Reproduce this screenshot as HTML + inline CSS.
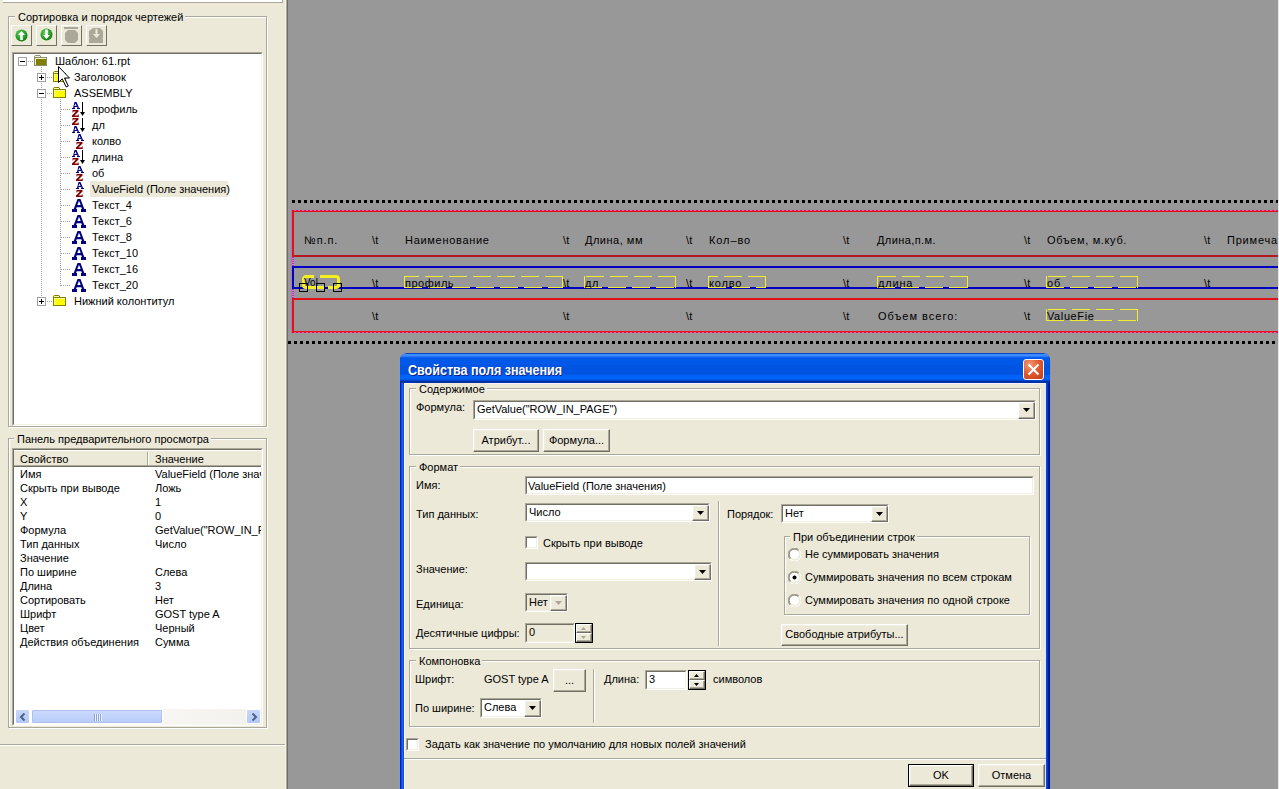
<!DOCTYPE html>
<html><head><meta charset="utf-8">
<style>
*{margin:0;padding:0;box-sizing:border-box}
html,body{width:1279px;height:789px;overflow:hidden;background:#ECE9D8;font-family:"Liberation Sans",sans-serif;font-size:11px;color:#000;position:relative}
.a{position:absolute}
.t{position:absolute;white-space:nowrap;line-height:13px;font-size:11px}
.gb{position:absolute;border:1px solid #ACA899;box-shadow:inset 1px 1px 0 #fff,1px 1px 0 #fff}
.lbl{position:absolute;background:#ECE9D8;padding:0 2px 0 1px;line-height:13px;white-space:nowrap}
.sunk{position:absolute;border-style:solid;border-width:1px;border-color:#ACA899 #fff #fff #ACA899;background:#fff}
.sunk>.in{position:absolute;left:0;top:0;right:0;bottom:0;border-style:solid;border-width:1px;border-color:#716F64 #F1EFE2 #F1EFE2 #716F64}
.tb{position:absolute;width:21px;height:21px;border-style:solid;border-width:1px;border-color:#fff #716F64 #716F64 #fff}
.hd{position:absolute;height:1px;background:repeating-linear-gradient(90deg,#A0A0A0 0 1px,transparent 1px 2px)}
.vd{position:absolute;width:1px;background:repeating-linear-gradient(180deg,#A0A0A0 0 1px,transparent 1px 2px)}
.pm{position:absolute;width:9px;height:9px;border:1px solid #A0A0A0;background:#fff}
.pm>div{margin:0}
.pm .a{left:1px}
.cv{position:absolute}
.g{position:absolute;white-space:nowrap;line-height:13px;font-size:11px;color:#000}
.btn{position:absolute;background:#ECE9D8;border-style:solid;border-width:1px;border-color:#fff #716F64 #716F64 #fff;box-shadow:inset -1px -1px 0 #ACA899,inset 1px 1px 0 #F1EFE2}
</style></head><body>
<!-- LEFT PANEL -->
<div class="a" style="left:3px;top:-10px;width:280px;height:13px;background:#fff;border-right:1px solid #ACA899;border-bottom:1px solid #ACA899"></div>
<div class="a" style="left:285px;top:0;width:1px;height:789px;background:#F5F3EA"></div>
<div class="a" style="left:286px;top:0;width:1px;height:789px;background:#ACA899"></div>
<div class="a" style="left:287px;top:0;width:1px;height:789px;background:#716F64"></div>

<div class="gb" style="left:8px;top:16px;width:259px;height:411px"></div>
<div class="lbl" style="left:15px;top:11px;padding:0 2px 0 3px">Сортировка и порядок чертежей</div>
<!-- toolbar -->
<div class="tb" style="left:11px;top:25px"><svg class="a" style="left:3px;top:3px" width="13" height="13" viewBox="0 0 13 13"><defs><radialGradient id="g1" cx="0.4" cy="0.35" r="0.7"><stop offset="0" stop-color="#5FD35F"/><stop offset="1" stop-color="#0A7A0A"/></radialGradient></defs><circle cx="6.5" cy="6.5" r="6" fill="url(#g1)"/><path d="M6.5,2l3.5,4h-2.2v5h-2.6v-5h-2.2z" fill="#fff"/></svg></div>
<div class="tb" style="left:36px;top:25px"><svg class="a" style="left:3px;top:2px" width="13" height="13" viewBox="0 0 13 13"><circle cx="6.5" cy="6.5" r="6" fill="url(#g1)"/><path d="M6.5,11l3.5,-4h-2.2v-5.5h-2.6v5.5h-2.2z" fill="#fff"/></svg></div>
<div class="tb" style="left:61px;top:25px"><svg class="a" style="left:2px;top:1px" width="16" height="17" viewBox="0 0 16 17"><rect x="0" y="0" width="14" height="2" fill="#ACA899"/><path d="M4,3h7l3,3v7l-3,3h-7l-3,-3v-7z" fill="#ACA899"/></svg></div>
<div class="tb" style="left:86px;top:25px"><svg class="a" style="left:2px;top:1px" width="16" height="17" viewBox="0 0 16 17"><path d="M4,1h7l3,3v7l-1,1h1v4h-14v-4h1l-1,-1v-7z" fill="#ACA899"/><path d="M6.5,2h2v5h2.5l-3.5,4l-3.5,-4h2.5z" fill="#ECE9D8"/></svg></div>

<!-- tree view -->
<div class="sunk" style="left:12px;top:52px;width:251px;height:374px"><div class="in"></div></div>
<div class="vd" style="left:41px;top:67px;height:234px"></div>
<div class="vd" style="left:60px;top:99px;height:187px"></div>
<div class="hd" style="left:28px;top:61px;width:6px"></div>
<div class="pm" style="left:18px;top:57px"><div class="a" style="left:1px;top:3px;width:5px;height:1px;background:#000"></div></div>
<div class="a" style="left:34px;top:55px;width:13px;height:11px"><svg class="a" style="left:0;top:0" width="13" height="11" viewBox="0 0 13 11"><path d="M0.5,2.5V1.2L1.2,0.5H6L7,2.5" fill="#F4F0C8" stroke="#8C8C70" stroke-width="1"/><rect x="0.5" y="2.5" width="12" height="8" fill="#808000" stroke="#8C8C70" stroke-width="1"/><path d="M1.5,10V3.5H12" fill="none" stroke="#F4F0C8" stroke-width="1"/></svg></div>
<div class="t" style="left:55px;top:55px">Шаблон: 61.rpt</div>
<div class="hd" style="left:47px;top:77px;width:6px"></div>
<div class="pm" style="left:37px;top:73px"><div class="a" style="left:1px;top:3px;width:5px;height:1px;background:#000"></div><div class="a" style="left:3px;top:1px;width:1px;height:5px;background:#000"></div></div>
<div class="a" style="left:53px;top:71px;width:13px;height:11px"><svg class="a" style="left:0;top:0" width="13" height="11" viewBox="0 0 13 11"><path d="M0.5,2.5V1.2L1.2,0.5H6L7,2.5" fill="#FFFFA0" stroke="#808000" stroke-width="1"/><rect x="0.5" y="2.5" width="12" height="8" fill="#FFFF00" stroke="#808000" stroke-width="1"/><path d="M1.5,10V3.5H12" fill="none" stroke="#FFFFA0" stroke-width="1"/></svg></div>
<div class="t" style="left:74px;top:71px">Заголовок</div>
<div class="hd" style="left:47px;top:93px;width:6px"></div>
<div class="pm" style="left:37px;top:89px"><div class="a" style="left:1px;top:3px;width:5px;height:1px;background:#000"></div></div>
<div class="a" style="left:53px;top:87px;width:13px;height:11px"><svg class="a" style="left:0;top:0" width="13" height="11" viewBox="0 0 13 11"><path d="M0.5,2.5V1.2L1.2,0.5H6L7,2.5" fill="#FFFFA0" stroke="#808000" stroke-width="1"/><rect x="0.5" y="2.5" width="12" height="8" fill="#FFFF00" stroke="#808000" stroke-width="1"/><path d="M1.5,10V3.5H12" fill="none" stroke="#FFFFA0" stroke-width="1"/></svg></div>
<div class="t" style="left:74px;top:87px">ASSEMBLY</div>
<div class="hd" style="left:61px;top:109px;width:10px"></div>
<svg class="a" style="left:72px;top:101px" width="16" height="16" viewBox="0 0 16 16"><g transform="translate(0,1)"><path d="M2.5,0h2l2.5,6h1v1h-3v-1h0.6l-0.4-1h-2.4l-0.4,1h0.6v1h-3v-1h1z M2.4,4h2.2l-1.1,-2.6z" fill="#00007F" fill-rule="evenodd"/></g><g transform="translate(0,9)"><path d="M0.5,0h6v1.6l-4,4h3.2v-1h1v2.4h-6.7v-1.6l4-4h-2.8v1h-0.7z" fill="#7F0000"/></g><rect x="10" y="1" width="1" height="11" fill="#000"/><path d="M8,11h5l-2.5,4z" fill="#000"/></svg>
<div class="t" style="left:92px;top:103px">профиль</div>
<div class="hd" style="left:61px;top:125px;width:10px"></div>
<svg class="a" style="left:72px;top:117px" width="16" height="16" viewBox="0 0 16 16"><g transform="translate(0,1)"><path d="M0.5,0h6v1.6l-4,4h3.2v-1h1v2.4h-6.7v-1.6l4-4h-2.8v1h-0.7z" fill="#7F0000"/></g><g transform="translate(0,9)"><path d="M2.5,0h2l2.5,6h1v1h-3v-1h0.6l-0.4-1h-2.4l-0.4,1h0.6v1h-3v-1h1z M2.4,4h2.2l-1.1,-2.6z" fill="#00007F" fill-rule="evenodd"/></g><rect x="10" y="1" width="1" height="11" fill="#000"/><path d="M8,11h5l-2.5,4z" fill="#000"/></svg>
<div class="t" style="left:92px;top:119px">дл</div>
<div class="hd" style="left:61px;top:141px;width:10px"></div>
<svg class="a" style="left:72px;top:133px" width="16" height="16" viewBox="0 0 16 16"><g transform="translate(4,1)"><path d="M2.5,0h2l2.5,6h1v1h-3v-1h0.6l-0.4-1h-2.4l-0.4,1h0.6v1h-3v-1h1z M2.4,4h2.2l-1.1,-2.6z" fill="#00007F" fill-rule="evenodd"/></g><g transform="translate(4,9)"><path d="M0.5,0h6v1.6l-4,4h3.2v-1h1v2.4h-6.7v-1.6l4-4h-2.8v1h-0.7z" fill="#7F0000"/></g></svg>
<div class="t" style="left:92px;top:135px">колво</div>
<div class="hd" style="left:61px;top:157px;width:10px"></div>
<svg class="a" style="left:72px;top:149px" width="16" height="16" viewBox="0 0 16 16"><g transform="translate(0,1)"><path d="M2.5,0h2l2.5,6h1v1h-3v-1h0.6l-0.4-1h-2.4l-0.4,1h0.6v1h-3v-1h1z M2.4,4h2.2l-1.1,-2.6z" fill="#00007F" fill-rule="evenodd"/></g><g transform="translate(0,9)"><path d="M0.5,0h6v1.6l-4,4h3.2v-1h1v2.4h-6.7v-1.6l4-4h-2.8v1h-0.7z" fill="#7F0000"/></g><rect x="10" y="1" width="1" height="11" fill="#000"/><path d="M8,11h5l-2.5,4z" fill="#000"/></svg>
<div class="t" style="left:92px;top:151px">длина</div>
<div class="hd" style="left:61px;top:173px;width:10px"></div>
<svg class="a" style="left:72px;top:165px" width="16" height="16" viewBox="0 0 16 16"><g transform="translate(4,1)"><path d="M2.5,0h2l2.5,6h1v1h-3v-1h0.6l-0.4-1h-2.4l-0.4,1h0.6v1h-3v-1h1z M2.4,4h2.2l-1.1,-2.6z" fill="#00007F" fill-rule="evenodd"/></g><g transform="translate(4,9)"><path d="M0.5,0h6v1.6l-4,4h3.2v-1h1v2.4h-6.7v-1.6l4-4h-2.8v1h-0.7z" fill="#7F0000"/></g></svg>
<div class="t" style="left:92px;top:167px">об</div>
<div class="hd" style="left:61px;top:189px;width:10px"></div>
<svg class="a" style="left:72px;top:181px" width="16" height="16" viewBox="0 0 16 16"><g transform="translate(4,1)"><path d="M2.5,0h2l2.5,6h1v1h-3v-1h0.6l-0.4-1h-2.4l-0.4,1h0.6v1h-3v-1h1z M2.4,4h2.2l-1.1,-2.6z" fill="#00007F" fill-rule="evenodd"/></g><g transform="translate(4,9)"><path d="M0.5,0h6v1.6l-4,4h3.2v-1h1v2.4h-6.7v-1.6l4-4h-2.8v1h-0.7z" fill="#7F0000"/></g></svg>
<div class="a" style="left:90px;top:181px;width:138px;height:16px;background:#ECE9D8"></div>
<div class="t" style="left:92px;top:183px">ValueField (Поле значения)</div>
<div class="hd" style="left:61px;top:205px;width:10px"></div>
<svg class="a" style="left:72px;top:199px" width="14" height="13" viewBox="0 0 14 13"><path d="M5.5,0h3l3.8,10h1.7v3h-5v-3h0.9l-0.6,-1.8h-4.6l-0.6,1.8h0.9v3h-5v-3h1.7z M5.3,6h3.4l-1.7,-4.3z" fill="#00007F" fill-rule="evenodd"/></svg>
<div class="t" style="left:92px;top:199px">Текст_4</div>
<div class="hd" style="left:61px;top:221px;width:10px"></div>
<svg class="a" style="left:72px;top:215px" width="14" height="13" viewBox="0 0 14 13"><path d="M5.5,0h3l3.8,10h1.7v3h-5v-3h0.9l-0.6,-1.8h-4.6l-0.6,1.8h0.9v3h-5v-3h1.7z M5.3,6h3.4l-1.7,-4.3z" fill="#00007F" fill-rule="evenodd"/></svg>
<div class="t" style="left:92px;top:215px">Текст_6</div>
<div class="hd" style="left:61px;top:237px;width:10px"></div>
<svg class="a" style="left:72px;top:231px" width="14" height="13" viewBox="0 0 14 13"><path d="M5.5,0h3l3.8,10h1.7v3h-5v-3h0.9l-0.6,-1.8h-4.6l-0.6,1.8h0.9v3h-5v-3h1.7z M5.3,6h3.4l-1.7,-4.3z" fill="#00007F" fill-rule="evenodd"/></svg>
<div class="t" style="left:92px;top:231px">Текст_8</div>
<div class="hd" style="left:61px;top:253px;width:10px"></div>
<svg class="a" style="left:72px;top:247px" width="14" height="13" viewBox="0 0 14 13"><path d="M5.5,0h3l3.8,10h1.7v3h-5v-3h0.9l-0.6,-1.8h-4.6l-0.6,1.8h0.9v3h-5v-3h1.7z M5.3,6h3.4l-1.7,-4.3z" fill="#00007F" fill-rule="evenodd"/></svg>
<div class="t" style="left:92px;top:247px">Текст_10</div>
<div class="hd" style="left:61px;top:269px;width:10px"></div>
<svg class="a" style="left:72px;top:263px" width="14" height="13" viewBox="0 0 14 13"><path d="M5.5,0h3l3.8,10h1.7v3h-5v-3h0.9l-0.6,-1.8h-4.6l-0.6,1.8h0.9v3h-5v-3h1.7z M5.3,6h3.4l-1.7,-4.3z" fill="#00007F" fill-rule="evenodd"/></svg>
<div class="t" style="left:92px;top:263px">Текст_16</div>
<div class="hd" style="left:61px;top:285px;width:10px"></div>
<svg class="a" style="left:72px;top:279px" width="14" height="13" viewBox="0 0 14 13"><path d="M5.5,0h3l3.8,10h1.7v3h-5v-3h0.9l-0.6,-1.8h-4.6l-0.6,1.8h0.9v3h-5v-3h1.7z M5.3,6h3.4l-1.7,-4.3z" fill="#00007F" fill-rule="evenodd"/></svg>
<div class="t" style="left:92px;top:279px">Текст_20</div>
<div class="hd" style="left:47px;top:301px;width:6px"></div>
<div class="pm" style="left:37px;top:297px"><div class="a" style="left:1px;top:3px;width:5px;height:1px;background:#000"></div><div class="a" style="left:3px;top:1px;width:1px;height:5px;background:#000"></div></div>
<div class="a" style="left:53px;top:295px;width:13px;height:11px"><svg class="a" style="left:0;top:0" width="13" height="11" viewBox="0 0 13 11"><path d="M0.5,2.5V1.2L1.2,0.5H6L7,2.5" fill="#FFFFA0" stroke="#808000" stroke-width="1"/><rect x="0.5" y="2.5" width="12" height="8" fill="#FFFF00" stroke="#808000" stroke-width="1"/><path d="M1.5,10V3.5H12" fill="none" stroke="#FFFFA0" stroke-width="1"/></svg></div>
<div class="t" style="left:74px;top:295px">Нижний колонтитул</div>
<!-- cursor -->
<svg class="a" style="left:58px;top:66px" width="13" height="22" viewBox="0 0 13 22"><path d="M0.5,0.5V16.5L4.2,12.8L8.2,21L10.3,20L6.5,12H11.5Z" fill="#fff" stroke="#000" stroke-width="1" stroke-linejoin="miter"/></svg>

<!-- preview panel -->
<div class="gb" style="left:8px;top:438px;width:259px;height:290px"></div>
<div class="lbl" style="left:14px;top:433px;padding:0 2px 0 3px">Панель предварительного просмотра</div>
<div class="sunk" style="left:12px;top:448px;width:251px;height:278px"><div class="in"></div></div>
<div class="a" style="left:14px;top:450px;width:247px;height:17px;background:#ECE9D8;border-top:1px solid #fff;border-bottom:1px solid #716F64;box-shadow:inset 0 -1px 0 #ACA899"></div>
<div class="a" style="left:147px;top:452px;width:1px;height:13px;background:#ACA899"></div>
<div class="a" style="left:148px;top:452px;width:1px;height:13px;background:#fff"></div>
<div class="t" style="left:20px;top:453px">Свойство</div>
<div class="t" style="left:155px;top:453px">Значение</div>
<div class="t" style="left:20px;top:468px">Имя</div>
<div class="t" style="left:155px;top:468px;width:106px;overflow:hidden">ValueField (Поле знач</div>
<div class="t" style="left:20px;top:482px">Скрыть при выводе</div>
<div class="t" style="left:155px;top:482px;width:106px;overflow:hidden">Ложь</div>
<div class="t" style="left:20px;top:496px">X</div>
<div class="t" style="left:155px;top:496px;width:106px;overflow:hidden">1</div>
<div class="t" style="left:20px;top:510px">Y</div>
<div class="t" style="left:155px;top:510px;width:106px;overflow:hidden">0</div>
<div class="t" style="left:20px;top:524px">Формула</div>
<div class="t" style="left:155px;top:524px;width:106px;overflow:hidden">GetValue("ROW_IN_F</div>
<div class="t" style="left:20px;top:538px">Тип данных</div>
<div class="t" style="left:155px;top:538px;width:106px;overflow:hidden">Число</div>
<div class="t" style="left:20px;top:552px">Значение</div>
<div class="t" style="left:20px;top:566px">По ширине</div>
<div class="t" style="left:155px;top:566px;width:106px;overflow:hidden">Слева</div>
<div class="t" style="left:20px;top:580px">Длина</div>
<div class="t" style="left:155px;top:580px;width:106px;overflow:hidden">3</div>
<div class="t" style="left:20px;top:594px">Сортировать</div>
<div class="t" style="left:155px;top:594px;width:106px;overflow:hidden">Нет</div>
<div class="t" style="left:20px;top:608px">Шрифт</div>
<div class="t" style="left:155px;top:608px;width:106px;overflow:hidden">GOST type A</div>
<div class="t" style="left:20px;top:622px">Цвет</div>
<div class="t" style="left:155px;top:622px;width:106px;overflow:hidden">Черный</div>
<div class="t" style="left:20px;top:636px">Действия объединения</div>
<div class="t" style="left:155px;top:636px;width:106px;overflow:hidden">Сумма</div>
<!-- scrollbar -->
<div class="a" style="left:14px;top:709px;width:247px;height:16px;background:linear-gradient(90deg,#FEFEFB,#F3F1EC)"></div>
<div class="a" style="left:15px;top:709px;width:15px;height:15px;border-radius:2px;background:linear-gradient(180deg,#C8D6FB,#B4C8F6);border:1px solid #fff"><svg class="a" style="left:3px;top:3px" width="8" height="8" viewBox="0 0 8 8"><path d="M5.5,0.5l-3.5,3.5l3.5,3.5" fill="none" stroke="#4D6185" stroke-width="2"/></svg></div>
<div class="a" style="left:31px;top:709px;width:132px;height:15px;border-radius:2px;background:linear-gradient(180deg,#CCDBFD,#B8CBF8);border:1px solid #fff;box-shadow:0 0 0 1px #B0C0E8 inset"><div class="a" style="left:62px;top:4px;width:8px;height:7px;background:repeating-linear-gradient(90deg,#8CA3D8 0 1px,#EEF3FE 1px 2px)"></div></div>
<div class="a" style="left:246px;top:709px;width:15px;height:15px;border-radius:2px;background:linear-gradient(180deg,#C8D6FB,#B4C8F6);border:1px solid #fff"><svg class="a" style="left:3px;top:3px" width="8" height="8" viewBox="0 0 8 8"><path d="M2.5,0.5l3.5,3.5l-3.5,3.5" fill="none" stroke="#4D6185" stroke-width="2"/></svg></div>
<!-- separator -->
<div class="a" style="left:0;top:744px;width:285px;height:1px;background:#ACA899"></div>
<div class="a" style="left:0;top:745px;width:285px;height:1px;background:#fff"></div>
<!-- CANVAS -->
<div class="a" style="left:288px;top:0;width:990px;height:789px;background:#989898"></div>
<div class="cv" style="left:292px;top:200px;width:986px;height:3px;background:repeating-linear-gradient(90deg,#000 0 3px,transparent 3px 6px)"></div>
<div class="cv" style="left:288px;top:341px;width:990px;height:3px;background:repeating-linear-gradient(90deg,#000 0 3px,transparent 3px 6px)"></div>
<div class="cv" style="left:292px;top:210px;width:986px;height:2px;background:#E3101A"></div>
<div class="cv" style="left:292px;top:210px;width:986px;height:1px;background:repeating-linear-gradient(90deg,#E0107A 0 2px,#FF5C78 2px 4px)"></div>
<div class="cv" style="left:292px;top:255px;width:986px;height:2px;background:#B01A20"></div>
<div class="cv" style="left:292px;top:210px;width:2px;height:47px;background:#E3101A"></div>
<div class="cv" style="left:292px;top:266px;width:986px;height:2px;background:#0000C4"></div>
<div class="cv" style="left:292px;top:287px;width:986px;height:2px;background:#0000C4"></div>
<div class="cv" style="left:292px;top:266px;width:2px;height:23px;background:#0000C4"></div>
<div class="cv" style="left:292px;top:298px;width:986px;height:2px;background:#E3101A"></div>
<div class="cv" style="left:292px;top:331px;width:986px;height:2px;background:#E3101A"></div>
<div class="cv" style="left:292px;top:332px;width:986px;height:1px;background:repeating-linear-gradient(90deg,#E0107A 0 2px,#FF5C78 2px 4px)"></div>
<div class="cv" style="left:292px;top:298px;width:2px;height:35px;background:#E3101A"></div>
<div class="cv" style="left:292px;top:257px;width:2px;height:9px;background:repeating-linear-gradient(180deg,#A040B0 0 1px,#F070E0 1px 2px)"></div>
<div class="cv" style="left:292px;top:289px;width:2px;height:9px;background:repeating-linear-gradient(180deg,#A040B0 0 1px,#F070E0 1px 2px)"></div>
<div class="cv" style="left:291px;top:210px;width:1px;height:123px;background:repeating-linear-gradient(180deg,#C060C0 0 1px,transparent 1px 2px)"></div>
<div class="g" style="left:304px;top:234px;letter-spacing:0.9px">№п.п.</div>
<div class="g" style="left:372px;top:234px;letter-spacing:0.2px">\t</div>
<div class="g" style="left:563px;top:234px;letter-spacing:0.2px">\t</div>
<div class="g" style="left:686px;top:234px;letter-spacing:0.2px">\t</div>
<div class="g" style="left:843px;top:234px;letter-spacing:0.2px">\t</div>
<div class="g" style="left:1024px;top:234px;letter-spacing:0.2px">\t</div>
<div class="g" style="left:1204px;top:234px;letter-spacing:0.2px">\t</div>
<div class="g" style="left:405px;top:234px;letter-spacing:0.7px">Наименование</div>
<div class="g" style="left:585px;top:234px;letter-spacing:0.5px">Длина, мм</div>
<div class="g" style="left:709px;top:234px;letter-spacing:0.9px">Кол–во</div>
<div class="g" style="left:877px;top:234px;letter-spacing:0.4px">Длина,п.м.</div>
<div class="g" style="left:1047px;top:234px;letter-spacing:0.64px">Объем, м.куб.</div>
<div class="g" style="left:1227px;top:234px;letter-spacing:0.8px">Примечание</div>
<div class="cv" style="left:545px;top:276px;width:18px;height:1px;background:#F0EC30"></div>
<div class="cv" style="left:521px;top:276px;width:18px;height:1px;background:#F0EC30"></div>
<div class="cv" style="left:497px;top:276px;width:18px;height:1px;background:#F0EC30"></div>
<div class="cv" style="left:473px;top:276px;width:18px;height:1px;background:#F0EC30"></div>
<div class="cv" style="left:449px;top:276px;width:18px;height:1px;background:#F0EC30"></div>
<div class="cv" style="left:425px;top:276px;width:18px;height:1px;background:#F0EC30"></div>
<div class="cv" style="left:404px;top:276px;width:15px;height:1px;background:#F0EC30"></div>
<div class="cv" style="left:404px;top:287px;width:18px;height:1px;background:#F0EC30"></div>
<div class="cv" style="left:428px;top:287px;width:18px;height:1px;background:#F0EC30"></div>
<div class="cv" style="left:452px;top:287px;width:18px;height:1px;background:#F0EC30"></div>
<div class="cv" style="left:476px;top:287px;width:18px;height:1px;background:#F0EC30"></div>
<div class="cv" style="left:500px;top:287px;width:18px;height:1px;background:#F0EC30"></div>
<div class="cv" style="left:524px;top:287px;width:18px;height:1px;background:#F0EC30"></div>
<div class="cv" style="left:548px;top:287px;width:15px;height:1px;background:#F0EC30"></div>
<div class="cv" style="left:404px;top:276px;width:1px;height:12px;background:#F0EC30"></div>
<div class="cv" style="left:562px;top:276px;width:1px;height:12px;background:#F0EC30"></div>
<div class="cv" style="left:658px;top:276px;width:18px;height:1px;background:#F0EC30"></div>
<div class="cv" style="left:634px;top:276px;width:18px;height:1px;background:#F0EC30"></div>
<div class="cv" style="left:610px;top:276px;width:18px;height:1px;background:#F0EC30"></div>
<div class="cv" style="left:586px;top:276px;width:18px;height:1px;background:#F0EC30"></div>
<div class="cv" style="left:584px;top:287px;width:18px;height:1px;background:#F0EC30"></div>
<div class="cv" style="left:608px;top:287px;width:18px;height:1px;background:#F0EC30"></div>
<div class="cv" style="left:632px;top:287px;width:18px;height:1px;background:#F0EC30"></div>
<div class="cv" style="left:656px;top:287px;width:18px;height:1px;background:#F0EC30"></div>
<div class="cv" style="left:584px;top:276px;width:1px;height:12px;background:#F0EC30"></div>
<div class="cv" style="left:675px;top:276px;width:1px;height:12px;background:#F0EC30"></div>
<div class="cv" style="left:748px;top:276px;width:18px;height:1px;background:#F0EC30"></div>
<div class="cv" style="left:724px;top:276px;width:18px;height:1px;background:#F0EC30"></div>
<div class="cv" style="left:708px;top:276px;width:10px;height:1px;background:#F0EC30"></div>
<div class="cv" style="left:708px;top:287px;width:18px;height:1px;background:#F0EC30"></div>
<div class="cv" style="left:732px;top:287px;width:18px;height:1px;background:#F0EC30"></div>
<div class="cv" style="left:756px;top:287px;width:10px;height:1px;background:#F0EC30"></div>
<div class="cv" style="left:708px;top:276px;width:1px;height:12px;background:#F0EC30"></div>
<div class="cv" style="left:765px;top:276px;width:1px;height:12px;background:#F0EC30"></div>
<div class="cv" style="left:950px;top:276px;width:18px;height:1px;background:#F0EC30"></div>
<div class="cv" style="left:926px;top:276px;width:18px;height:1px;background:#F0EC30"></div>
<div class="cv" style="left:902px;top:276px;width:18px;height:1px;background:#F0EC30"></div>
<div class="cv" style="left:878px;top:276px;width:18px;height:1px;background:#F0EC30"></div>
<div class="cv" style="left:877px;top:287px;width:18px;height:1px;background:#F0EC30"></div>
<div class="cv" style="left:901px;top:287px;width:18px;height:1px;background:#F0EC30"></div>
<div class="cv" style="left:925px;top:287px;width:18px;height:1px;background:#F0EC30"></div>
<div class="cv" style="left:949px;top:287px;width:18px;height:1px;background:#F0EC30"></div>
<div class="cv" style="left:877px;top:276px;width:1px;height:12px;background:#F0EC30"></div>
<div class="cv" style="left:967px;top:276px;width:1px;height:12px;background:#F0EC30"></div>
<div class="cv" style="left:1120px;top:276px;width:18px;height:1px;background:#F0EC30"></div>
<div class="cv" style="left:1096px;top:276px;width:18px;height:1px;background:#F0EC30"></div>
<div class="cv" style="left:1072px;top:276px;width:18px;height:1px;background:#F0EC30"></div>
<div class="cv" style="left:1048px;top:276px;width:18px;height:1px;background:#F0EC30"></div>
<div class="cv" style="left:1046px;top:287px;width:18px;height:1px;background:#F0EC30"></div>
<div class="cv" style="left:1070px;top:287px;width:18px;height:1px;background:#F0EC30"></div>
<div class="cv" style="left:1094px;top:287px;width:18px;height:1px;background:#F0EC30"></div>
<div class="cv" style="left:1118px;top:287px;width:18px;height:1px;background:#F0EC30"></div>
<div class="cv" style="left:1046px;top:276px;width:1px;height:12px;background:#F0EC30"></div>
<div class="cv" style="left:1137px;top:276px;width:1px;height:12px;background:#F0EC30"></div>
<div class="cv" style="left:1120px;top:309px;width:18px;height:1px;background:#F0EC30"></div>
<div class="cv" style="left:1096px;top:309px;width:18px;height:1px;background:#F0EC30"></div>
<div class="cv" style="left:1072px;top:309px;width:18px;height:1px;background:#F0EC30"></div>
<div class="cv" style="left:1048px;top:309px;width:18px;height:1px;background:#F0EC30"></div>
<div class="cv" style="left:1046px;top:320px;width:18px;height:1px;background:#F0EC30"></div>
<div class="cv" style="left:1070px;top:320px;width:18px;height:1px;background:#F0EC30"></div>
<div class="cv" style="left:1094px;top:320px;width:18px;height:1px;background:#F0EC30"></div>
<div class="cv" style="left:1118px;top:320px;width:18px;height:1px;background:#F0EC30"></div>
<div class="cv" style="left:1046px;top:309px;width:1px;height:12px;background:#F0EC30"></div>
<div class="cv" style="left:1137px;top:309px;width:1px;height:12px;background:#F0EC30"></div>
<div class="g" style="left:372px;top:277px;letter-spacing:0.2px">\t</div>
<div class="g" style="left:563px;top:277px;letter-spacing:0.2px">\t</div>
<div class="g" style="left:686px;top:277px;letter-spacing:0.2px">\t</div>
<div class="g" style="left:843px;top:277px;letter-spacing:0.2px">\t</div>
<div class="g" style="left:1024px;top:277px;letter-spacing:0.2px">\t</div>
<div class="g" style="left:1204px;top:277px;letter-spacing:0.2px">\t</div>
<div class="g" style="left:405px;top:277px;letter-spacing:0.5px">профиль</div>
<div class="g" style="left:585px;top:277px;letter-spacing:0.5px">дл</div>
<div class="g" style="left:709px;top:277px;letter-spacing:0.8px">колво</div>
<div class="g" style="left:878px;top:277px;letter-spacing:0.8px">длина</div>
<div class="g" style="left:1047px;top:277px;letter-spacing:0.8px">об</div>
<div class="g" style="left:372px;top:310px;letter-spacing:0.2px">\t</div>
<div class="g" style="left:563px;top:310px;letter-spacing:0.2px">\t</div>
<div class="g" style="left:686px;top:310px;letter-spacing:0.2px">\t</div>
<div class="g" style="left:843px;top:310px;letter-spacing:0.2px">\t</div>
<div class="g" style="left:1024px;top:310px;letter-spacing:0.2px">\t</div>
<div class="g" style="left:878px;top:310px;letter-spacing:1.0px">Объем всего:</div>
<div class="g" style="left:1047px;top:310px;letter-spacing:0.6px">ValueFie</div>
<svg class="cv" style="left:299px;top:273px" width="44" height="20" viewBox="0 0 44 20"><path d="M4.5,9V6a2.5,2.5 0 0 1 2.5,-2.5H15 M21,3.5H37a2.5,2.5 0 0 1 2.5,2.5V12a2.5,2.5 0 0 1 -2.5,2.5H29 M26,14.5H7a2.5,2.5 0 0 1 -2.5,-2.5V9" fill="none" stroke="#F4F020" stroke-width="3"/><text x="5" y="13" font-family="Liberation Sans" font-size="10" fill="#000">Vol</text><rect x="0.5" y="10.5" width="8" height="8" fill="none" stroke="#000"/><rect x="17.5" y="10.5" width="8" height="8" fill="none" stroke="#000"/><rect x="34.5" y="10.5" width="8" height="8" fill="none" stroke="#000"/></svg>
<div class="a" style="left:1278px;top:0;width:1px;height:789px;background:#E6E6E6"></div><!-- DIALOG -->
<div class="a" style="left:399px;top:360px;width:1px;height:440px;background:#9098B8"></div>
<div class="a" style="left:1050px;top:360px;width:1px;height:440px;background:#8A90B0"></div>
<div class="a" style="left:400px;top:353px;width:650px;height:440px;border-radius:7px 7px 0 0;background:linear-gradient(90deg,#0020C0 0 1px,#0846E8 1px 2px,#2060FF 2px 3px,#0A50D0 3px 4px,#ECE9D8 4px 646px,#0846E0 646px 647px,#0038D0 647px 648px,#001A90 648px 650px)"></div>
<div class="a" style="left:400px;top:353px;width:650px;height:30px;border-radius:7px 7px 0 0;background:linear-gradient(180deg,#0846C8 0 1px,#3C8CFF 1px 3px,#2A78FA 3px 4px,#0A60F0 4px 5px,#0058E8 5px 12px,#0054E2 12px 22px,#0062F6 22px 26px,#0058E4 26px 27px,#0048D0 27px 28px,#0030A8 28px 30px)"></div>
<div class="a" style="left:404px;top:383px;width:642px;height:410px;background:#ECE9D8;border-left:1px solid #F4F6FC;border-top:1px solid #F4F6FC;border-right:1px solid #E0E6F4"></div>
<div class="a" style="left:408px;top:362px;white-space:nowrap;font-size:14px;font-weight:bold;color:#fff;letter-spacing:0px;line-height:16px;text-shadow:1px 1px 0 #0A1E80;transform:scaleX(0.895);transform-origin:0 0">Свойства поля значения</div>
<div class="a" style="left:1023px;top:359px;width:21px;height:21px;border:1px solid #fff;border-radius:3px;background:radial-gradient(circle at 30% 25%,#F49A78 0,#E0582E 50%,#C33C18 100%)"><svg class="a" style="left:3px;top:3px" width="13" height="13" viewBox="0 0 13 13"><path d="M1.5,1.5L11.5,11.5M11.5,1.5L1.5,11.5" stroke="#fff" stroke-width="2"/></svg></div>
<div class="gb" style="left:409px;top:388px;width:631px;height:67px"></div>
<div class="lbl" style="left:416px;top:383px;padding:0 2px 0 3px">Содержимое</div>
<div class="t" style="left:416px;top:401px">Формула:</div>
<div class="sunk" style="left:473px;top:400px;width:563px;height:20px;background:#fff"><div class="in"></div></div>
<div class="btn" style="left:1018px;top:402px;width:17px;height:17px"><svg class="a" style="left:4px;top:5px" width="7" height="4" viewBox="0 0 7 4"><path d="M0,0h7l-3.5,4z" fill="#000"/></svg></div>
<div class="t" style="left:477px;top:403px">GetValue("ROW_IN_PAGE")</div>
<div class="btn" style="left:473px;top:429px;width:66px;height:23px"></div>
<div class="t" style="left:473px;top:434px;width:66px;text-align:center">Атрибут...</div>
<div class="btn" style="left:543px;top:429px;width:67px;height:23px"></div>
<div class="t" style="left:543px;top:434px;width:67px;text-align:center">Формула...</div>
<div class="gb" style="left:409px;top:466px;width:631px;height:183px"></div>
<div class="lbl" style="left:416px;top:461px;padding:0 2px 0 3px">Формат</div>
<div class="t" style="left:416px;top:479px">Имя:</div>
<div class="sunk" style="left:525px;top:476px;width:509px;height:19px;background:#fff"><div class="in"></div></div>
<div class="t" style="left:528px;top:480px">ValueField (Поле значения)</div>
<div class="t" style="left:416px;top:508px">Тип данных:</div>
<div class="sunk" style="left:525px;top:503px;width:185px;height:19px;background:#fff"><div class="in"></div></div>
<div class="btn" style="left:692px;top:505px;width:17px;height:16px"><svg class="a" style="left:4px;top:5px" width="7" height="4" viewBox="0 0 7 4"><path d="M0,0h7l-3.5,4z" fill="#000"/></svg></div>
<div class="t" style="left:529px;top:506px">Число</div>
<div class="a" style="left:525px;top:536px;width:13px;height:13px;border-style:solid;border-width:1px;border-color:#ACA899 #fff #fff #ACA899;background:#fff"><div class="a" style="left:0;top:0;right:0;bottom:0;border-style:solid;border-width:1px;border-color:#716F64 #F1EFE2 #F1EFE2 #716F64"></div></div>
<div class="t" style="left:543px;top:537px">Скрыть при выводе</div>
<div class="t" style="left:416px;top:563px">Значение:</div>
<div class="sunk" style="left:525px;top:562px;width:187px;height:19px;background:#fff"><div class="in"></div></div>
<div class="btn" style="left:694px;top:564px;width:17px;height:16px"><svg class="a" style="left:4px;top:5px" width="7" height="4" viewBox="0 0 7 4"><path d="M0,0h7l-3.5,4z" fill="#000"/></svg></div>
<div class="t" style="left:416px;top:598px">Единица:</div>
<div class="sunk" style="left:525px;top:593px;width:43px;height:19px;background:#ECE9D8"><div class="in"></div></div>
<div class="btn" style="left:550px;top:595px;width:17px;height:16px"><svg class="a" style="left:4px;top:5px" width="7" height="4" viewBox="0 0 7 4"><path d="M0,0h7l-3.5,4z" fill="#ACA899"/></svg></div>
<div class="t" style="left:529px;top:596px">Нет</div>
<div class="t" style="left:416px;top:627px">Десятичные цифры:</div>
<div class="sunk" style="left:525px;top:623px;width:50px;height:20px;background:#ECE9D8"><div class="in"></div></div>
<div class="t" style="left:529px;top:626px">0</div>
<div class="a" style="left:575px;top:623px;width:18px;height:20px;border:1px solid #000;background:#ECE9D8"></div>
<div class="btn" style="left:576px;top:624px;width:16px;height:9px"><svg class="a" style="left:4px;top:2px" width="5" height="3" viewBox="0 0 5 3"><path d="M2.5,0l2.5,3h-5z" fill="#ACA899"/></svg></div>
<div class="btn" style="left:576px;top:633px;width:16px;height:9px"><svg class="a" style="left:4px;top:2px" width="5" height="3" viewBox="0 0 5 3"><path d="M0,0h5l-2.5,3z" fill="#ACA899"/></svg></div>
<div class="a" style="left:718px;top:501px;width:1px;height:145px;background:#ACA899"></div>
<div class="a" style="left:719px;top:501px;width:1px;height:145px;background:#fff"></div>
<div class="t" style="left:727px;top:508px">Порядок:</div>
<div class="sunk" style="left:781px;top:504px;width:108px;height:19px;background:#fff"><div class="in"></div></div>
<div class="btn" style="left:871px;top:506px;width:17px;height:16px"><svg class="a" style="left:4px;top:5px" width="7" height="4" viewBox="0 0 7 4"><path d="M0,0h7l-3.5,4z" fill="#000"/></svg></div>
<div class="t" style="left:785px;top:507px">Нет</div>
<div class="gb" style="left:784px;top:536px;width:246px;height:79px"></div>
<div class="lbl" style="left:790px;top:531px;padding:0 2px 0 3px">При объединении строк</div>
<svg class="a" style="left:788px;top:548px" width="13" height="13" viewBox="0 0 13 13"><path d="M11.1,1.9A6.5,6.5 0 0 0 1.9,11.1" fill="none" stroke="#ACA899" stroke-width="1"/><path d="M10.4,2.6A5.5,5.5 0 0 0 2.6,10.4" fill="none" stroke="#716F64" stroke-width="1"/><path d="M1.9,11.1A6.5,6.5 0 0 0 11.1,1.9" fill="none" stroke="#fff" stroke-width="1"/><path d="M2.6,10.4A5.5,5.5 0 0 0 10.4,2.6" fill="none" stroke="#F1EFE2" stroke-width="1"/><circle cx="6.5" cy="6.5" r="4.5" fill="#fff"/></svg>
<div class="t" style="left:805px;top:548px">Не суммировать значения</div>
<svg class="a" style="left:788px;top:571px" width="13" height="13" viewBox="0 0 13 13"><path d="M11.1,1.9A6.5,6.5 0 0 0 1.9,11.1" fill="none" stroke="#ACA899" stroke-width="1"/><path d="M10.4,2.6A5.5,5.5 0 0 0 2.6,10.4" fill="none" stroke="#716F64" stroke-width="1"/><path d="M1.9,11.1A6.5,6.5 0 0 0 11.1,1.9" fill="none" stroke="#fff" stroke-width="1"/><path d="M2.6,10.4A5.5,5.5 0 0 0 10.4,2.6" fill="none" stroke="#F1EFE2" stroke-width="1"/><circle cx="6.5" cy="6.5" r="4.5" fill="#fff"/><circle cx="6.5" cy="6.5" r="2" fill="#000"/></svg>
<div class="t" style="left:805px;top:571px">Суммировать значения по всем строкам</div>
<svg class="a" style="left:788px;top:594px" width="13" height="13" viewBox="0 0 13 13"><path d="M11.1,1.9A6.5,6.5 0 0 0 1.9,11.1" fill="none" stroke="#ACA899" stroke-width="1"/><path d="M10.4,2.6A5.5,5.5 0 0 0 2.6,10.4" fill="none" stroke="#716F64" stroke-width="1"/><path d="M1.9,11.1A6.5,6.5 0 0 0 11.1,1.9" fill="none" stroke="#fff" stroke-width="1"/><path d="M2.6,10.4A5.5,5.5 0 0 0 10.4,2.6" fill="none" stroke="#F1EFE2" stroke-width="1"/><circle cx="6.5" cy="6.5" r="4.5" fill="#fff"/></svg>
<div class="t" style="left:805px;top:594px">Суммировать значения по одной строке</div>
<div class="btn" style="left:781px;top:624px;width:127px;height:22px"></div>
<div class="t" style="left:781px;top:628px;width:127px;text-align:center">Свободные атрибуты...</div>
<div class="gb" style="left:409px;top:660px;width:631px;height:67px"></div>
<div class="lbl" style="left:416px;top:655px;padding:0 2px 0 3px">Компоновка</div>
<div class="t" style="left:415px;top:673px">Шрифт:</div>
<div class="t" style="left:484px;top:673px">GOST type A</div>
<div class="btn" style="left:553px;top:669px;width:33px;height:23px"></div>
<div class="t" style="left:553px;top:674px;width:33px;text-align:center">...</div>
<div class="a" style="left:593px;top:669px;width:1px;height:54px;background:#ACA899"></div>
<div class="a" style="left:594px;top:669px;width:1px;height:54px;background:#fff"></div>
<div class="t" style="left:604px;top:673px">Длина:</div>
<div class="sunk" style="left:645px;top:670px;width:42px;height:20px;background:#fff"><div class="in"></div></div>
<div class="t" style="left:649px;top:673px">3</div>
<div class="a" style="left:688px;top:670px;width:18px;height:20px;border:1px solid #000;background:#ECE9D8"></div>
<div class="btn" style="left:689px;top:671px;width:16px;height:9px"><svg class="a" style="left:4px;top:2px" width="5" height="3" viewBox="0 0 5 3"><path d="M2.5,0l2.5,3h-5z" fill="#000"/></svg></div>
<div class="btn" style="left:689px;top:680px;width:16px;height:9px"><svg class="a" style="left:4px;top:2px" width="5" height="3" viewBox="0 0 5 3"><path d="M0,0h5l-2.5,3z" fill="#000"/></svg></div>
<div class="t" style="left:713px;top:673px">символов</div>
<div class="t" style="left:415px;top:702px">По ширине:</div>
<div class="sunk" style="left:480px;top:698px;width:62px;height:20px;background:#fff"><div class="in"></div></div>
<div class="btn" style="left:524px;top:700px;width:17px;height:17px"><svg class="a" style="left:4px;top:5px" width="7" height="4" viewBox="0 0 7 4"><path d="M0,0h7l-3.5,4z" fill="#000"/></svg></div>
<div class="t" style="left:484px;top:701px">Слева</div>
<div class="a" style="left:406px;top:738px;width:13px;height:13px;border-style:solid;border-width:1px;border-color:#ACA899 #fff #fff #ACA899;background:#fff"><div class="a" style="left:0;top:0;right:0;bottom:0;border-style:solid;border-width:1px;border-color:#716F64 #F1EFE2 #F1EFE2 #716F64"></div></div>
<div class="t" style="left:425px;top:738px">Задать как значение по умолчанию для новых полей значений</div>
<div class="a" style="left:404px;top:758px;width:642px;height:1px;background:#ACA899"></div>
<div class="a" style="left:404px;top:759px;width:642px;height:1px;background:#fff"></div>
<div class="a" style="left:908px;top:764px;width:66px;height:23px;border:1px solid #000"><div class="btn" style="left:0;top:0;right:0;bottom:0"></div></div>
<div class="t" style="left:908px;top:769px;width:66px;text-align:center">OK</div>
<div class="btn" style="left:978px;top:764px;width:67px;height:23px"></div>
<div class="t" style="left:978px;top:769px;width:67px;text-align:center">Отмена</div>
</body></html>
